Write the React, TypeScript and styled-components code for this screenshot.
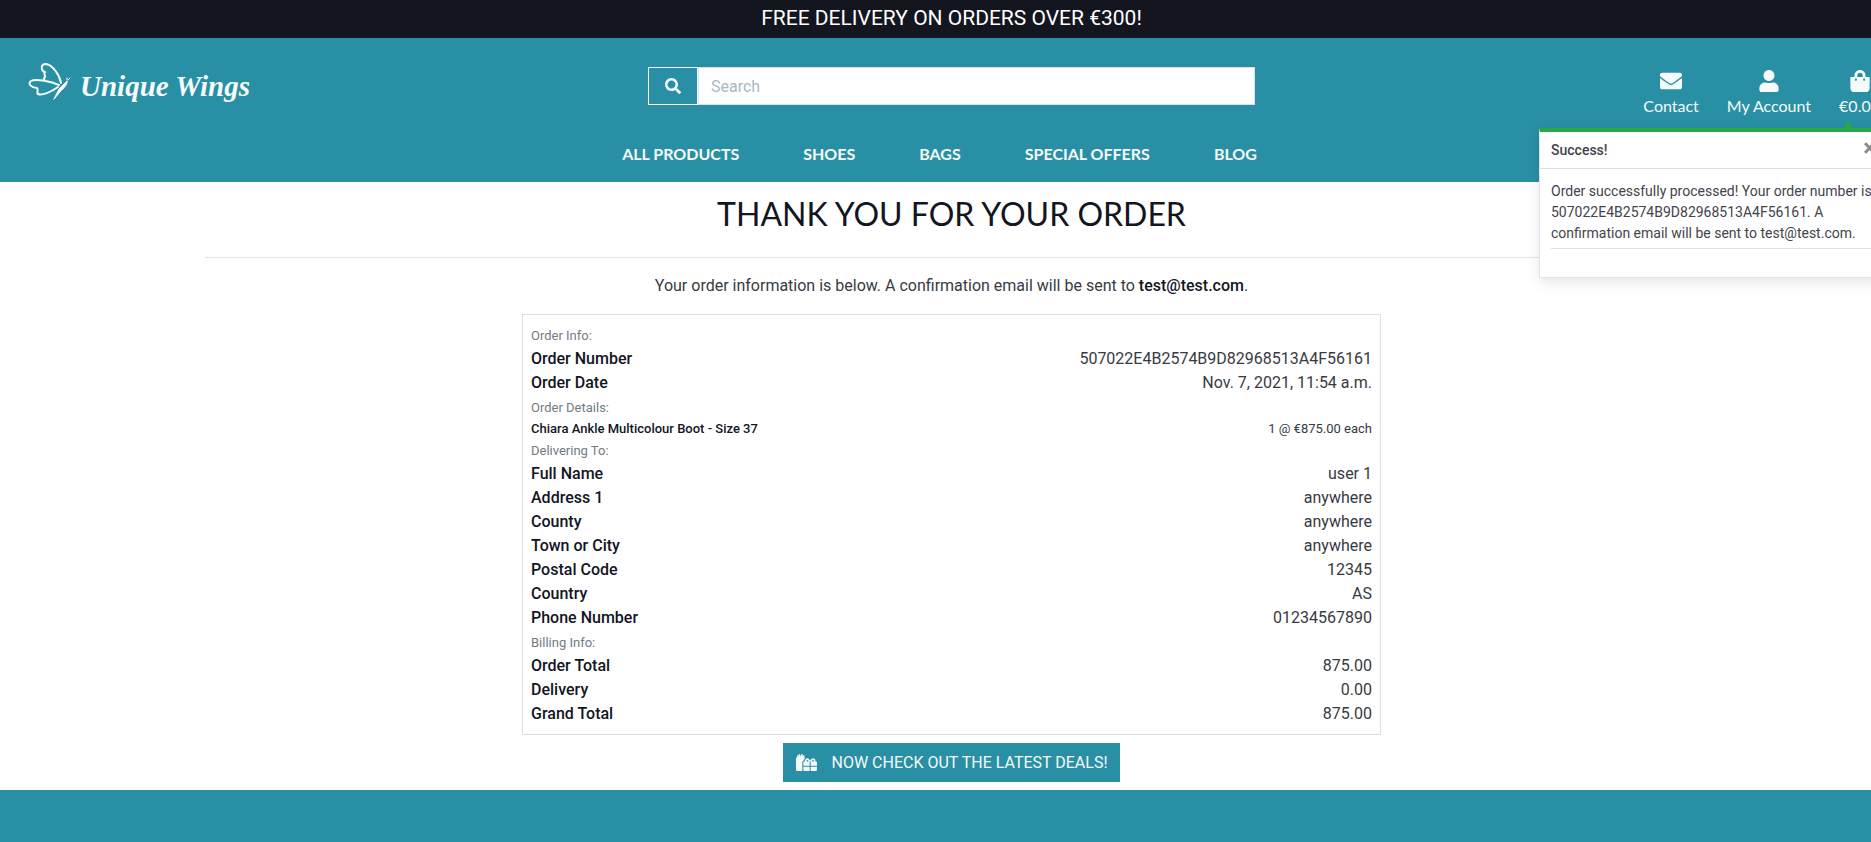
import React from "react";
import styled, { createGlobalStyle } from "styled-components";
import { FaEnvelope, FaGifts, FaSearch, FaShoppingBag, FaUser } from "react-icons/fa";

const teal = "#298fa5";
const ink = "#13151f";
const text = "#383a43";
const snow = "#f5fafa";
const line = "#dcdfe6";

const GlobalStyle = createGlobalStyle`
  *, *::before, *::after { box-sizing: border-box; }
  html { overflow-x: hidden; background: ${teal}; }
  body {
    margin: 0;
    overflow-x: hidden;
    color: ${text};
    font: 400 16px/24px Roboto, "Liberation Sans", sans-serif;
  }
  a { color: inherit; text-decoration: none; }
`;

/* The page is slightly wider than the viewport, so its right edge is cut off. */
const Page = styled.div`
  position: relative;
  margin-right: -32px;
`;

const Banner = styled.div`
  height: 38px;
  padding-top: 6px;
  background: ${ink};
  color: #fff;
  text-align: center;
  font-size: 21px;
`;

const Header = styled.header`
  height: 144px;
  background: ${teal};
  color: ${snow};
  font-family: Lato, "Liberation Sans", sans-serif;
`;

const TopRow = styled.div`
  display: grid;
  grid-template-columns: 1fr 607px 1fr;
  align-items: start;
  padding: 29px 23px 0;
  height: 92px;
`;

const Logo = styled.a`
  display: flex;
  gap: 8px;
  padding-left: 5px;
  font: italic 700 29px/38px "Liberation Serif", serif;
  white-space: nowrap;
  svg { margin-top: -4px; }
`;

const SearchForm = styled.form`
  display: flex;
`;

const SearchButton = styled.button`
  display: grid;
  place-items: center;
  width: 50px;
  height: 38px;
  padding: 0;
  border: 1px solid #fff;
  background: ${teal};
  color: ${snow};
  font-size: 16px;
`;

const SearchInput = styled.input`
  flex: 1;
  min-width: 0;
  height: 38px;
  padding: 0 12px;
  border: 1px solid ${line};
  border-radius: 0;
  background: #fff;
  color: ${ink};
  font: 400 16px/24px Roboto, sans-serif;
  &::placeholder { color: #a9bac6; opacity: 1; }
`;

const Account = styled.ul`
  display: flex;
  justify-content: flex-end;
  gap: 28px;
  margin: 0;
  padding: 0;
  list-style: none;
`;

const AccountLink = styled.a`
  display: flex;
  flex-direction: column;
  align-items: center;
  gap: 2px;
  padding-top: 3px;
  white-space: nowrap;
  svg { height: 22px; width: auto; }
`;

const Nav = styled.nav`
  display: flex;
  justify-content: center;
  gap: 64px;
  padding: 12px 24px 0 0;
  font-weight: 700;
`;

const Main = styled.main`
  display: flex;
  flex-direction: column;
  align-items: center;
  height: 608px;
  background: #fff;
`;

const Title = styled.h1`
  margin: 0;
  padding: 12px 0 24px;
  color: ${ink};
  font: 400 32px/39px Lato, "Liberation Sans", sans-serif;
`;

const Rule = styled.hr`
  width: calc(100% - 410px);
  margin: 0;
  border: 0;
  border-top: 1px solid #e4e5e7;
`;

const Intro = styled.p`
  margin: 0;
  padding: 16px 0;
  strong { color: ${ink}; font-weight: 500; }
`;

const OrderCard = styled.section`
  width: 859px;
  padding: 8px;
  border: 1px solid ${line};
`;

const GroupTitle = styled.h2`
  margin: 0;
  padding-top: 1px;
  height: 24px;
  color: #737b83;
  font-size: 13px;
  font-weight: 400;
`;

const Rows = styled.dl`
  margin: 0;
`;

const Row = styled.div<{ $small?: boolean }>`
  display: flex;
  justify-content: space-between;
  font-size: ${(p) => (p.$small ? 13 : 16)}px;
  line-height: ${(p) => (p.$small ? 19 : 24)}px;
  dt { color: ${ink}; font-weight: 500; }
  dd { margin: 0; }
`;

const DealsLink = styled.a`
  display: flex;
  align-items: center;
  gap: 14px;
  height: 39px;
  margin-top: 8px;
  padding: 0 12px 0 13px;
  background: ${teal};
  color: ${snow};
  svg { width: 21px; height: 17px; }
`;

const Footer = styled.footer`
  height: 52px;
  background: ${teal};
`;

const Toast = styled.aside`
  position: absolute;
  top: 128px;
  right: 14px;
  width: 350px;
  height: 150px;
  border: 1px solid #e2e3e5;
  border-top: 4px solid #28a745;
  background: #fff;
  box-shadow: 0 4px 12px rgba(0, 0, 0, 0.1);
  color: #42444c;
  font-size: 14px;
  line-height: 21px;
`;

const ToastArrow = styled.span`
  position: absolute;
  top: -13px;
  right: 36px;
  border: 4px solid transparent;
  border-top: 0;
  border-bottom: 9px solid #28a745;
`;

const ToastHeader = styled.div`
  display: flex;
  align-items: center;
  justify-content: space-between;
  height: 37px;
  padding: 0 12px 0 11px;
  border-bottom: 1px solid #cfe2e6;
  strong { font-weight: 500; }
`;

const CloseButton = styled.button`
  padding: 0 0 4px;
  border: 0;
  background: none;
  color: #8a8d90;
  font: 700 24px/24px Roboto, sans-serif;
`;

const ToastBody = styled.p`
  margin: 0 11px;
  padding: 12px 0 4px;
  border-bottom: 1px solid #e0e1e3;
`;

const Butterfly = () => (
  <svg width="44" height="40" viewBox="0 0 44 40" fill="none" stroke={snow} strokeLinecap="round" strokeLinejoin="round" aria-hidden="true">
    <path strokeWidth="2" d="M33 20C32 13 25 2 18 1C12 1 13 8 17 9C15 11 18 13 17 14C15 15 17 16 16 17" />
    <path strokeWidth="2" d="M31 22C24 19 8 15 3 18C-1 21 4 25 9 25C11 27 8 30 10 31C14 33 23 29 30 24" />
    <path fill={snow} strokeWidth="1" d="M26 36L31 26L39 18C40 21 36 25 32 29Z" />
    <path strokeWidth="1" d="M39 17V15M40 17L42 15" />
  </svg>
);

type Entry = [string, string];
type Group = { title: string; small?: boolean; entries: Entry[] };

const groups: Group[] = [
  {
    title: "Order Info:",
    entries: [
      ["Order Number", "507022E4B2574B9D82968513A4F56161"],
      ["Order Date", "Nov. 7, 2021, 11:54 a.m."],
    ],
  },
  {
    title: "Order Details:",
    small: true,
    entries: [["Chiara Ankle Multicolour Boot - Size 37", "1 @ €875.00 each"]],
  },
  {
    title: "Delivering To:",
    entries: [
      ["Full Name", "user 1"],
      ["Address 1", "anywhere"],
      ["County", "anywhere"],
      ["Town or City", "anywhere"],
      ["Postal Code", "12345"],
      ["Country", "AS"],
      ["Phone Number", "01234567890"],
    ],
  },
  {
    title: "Billing Info:",
    entries: [
      ["Order Total", "875.00"],
      ["Delivery", "0.00"],
      ["Grand Total", "875.00"],
    ],
  },
];

const navItems = ["ALL PRODUCTS", "SHOES", "BAGS", "SPECIAL OFFERS", "BLOG"];

export default function App() {
  return (
    <>
      <GlobalStyle />
      <Page>
        <Banner>FREE DELIVERY ON ORDERS OVER €300!</Banner>
        <Header>
          <TopRow>
            <Logo href="#">
              <Butterfly />
              Unique Wings
            </Logo>
            <SearchForm role="search">
              <SearchButton type="button" aria-label="Search">
                <FaSearch />
              </SearchButton>
              <SearchInput type="text" placeholder="Search" aria-label="Search products" />
            </SearchForm>
            <Account>
              <li><AccountLink href="#"><FaEnvelope />Contact</AccountLink></li>
              <li><AccountLink href="#"><FaUser />My Account</AccountLink></li>
              <li><AccountLink href="#"><FaShoppingBag />€0.00</AccountLink></li>
            </Account>
          </TopRow>
          <Nav>
            {navItems.map((item) => <a href="#" key={item}>{item}</a>)}
          </Nav>
        </Header>
        <Main>
          <Title>THANK YOU FOR YOUR ORDER</Title>
          <Rule />
          <Intro>
            Your order information is below. A confirmation email will be sent to <strong>test@test.com</strong>.
          </Intro>
          <OrderCard>
            {groups.map((group) => (
              <React.Fragment key={group.title}>
                <GroupTitle>{group.title}</GroupTitle>
                <Rows>
                  {group.entries.map(([label, value]) => (
                    <Row key={label} $small={group.small}>
                      <dt>{label}</dt>
                      <dd>{value}</dd>
                    </Row>
                  ))}
                </Rows>
              </React.Fragment>
            ))}
          </OrderCard>
          <DealsLink href="#">
            <FaGifts />
            NOW CHECK OUT THE LATEST DEALS!
          </DealsLink>
        </Main>
        <Footer />
        <Toast role="status">
          <ToastArrow />
          <ToastHeader>
            <strong>Success!</strong>
            <CloseButton type="button" aria-label="Close">×</CloseButton>
          </ToastHeader>
          <ToastBody>
            Order successfully processed! Your order number is 507022E4B2574B9D82968513A4F56161. A confirmation email will be sent to test@test.com.
          </ToastBody>
        </Toast>
      </Page>
    </>
  );
}
